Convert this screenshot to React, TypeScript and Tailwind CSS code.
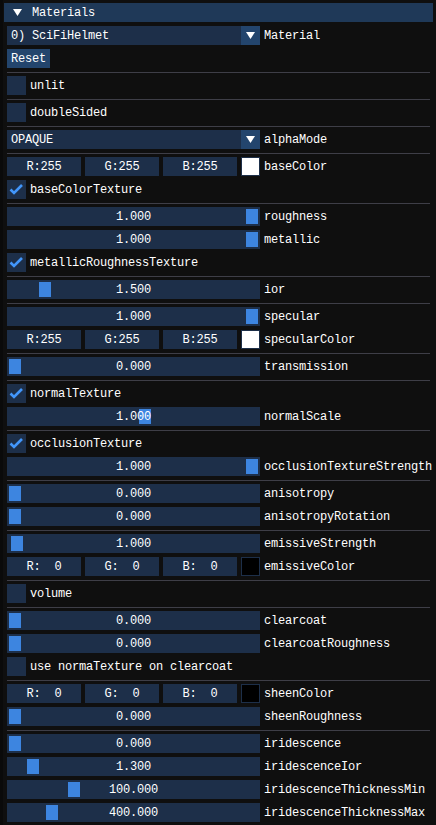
import React from 'react';

const FONT = { fontFamily: '"Liberation Mono", "DejaVu Sans Mono", monospace' };

type Row =
  | { kind: 'combo'; value: string; label: string }
  | { kind: 'button'; label: string }
  | { kind: 'check'; label: string; checked?: boolean }
  | { kind: 'slider'; value: string; grab: number; label: string }
  | { kind: 'color'; r: string; g: string; b: string; swatch: string; label: string }
  | { kind: 'sep' };

// grab = offset of the slider knob from the left edge of the frame (2..239)
const rows: Row[] = [
  { kind: 'combo', value: '0) SciFiHelmet', label: 'Material' },
  { kind: 'button', label: 'Reset' },
  { kind: 'sep' },
  { kind: 'check', label: 'unlit' },
  { kind: 'sep' },
  { kind: 'check', label: 'doubleSided' },
  { kind: 'sep' },
  { kind: 'combo', value: 'OPAQUE', label: 'alphaMode' },
  { kind: 'sep' },
  { kind: 'color', r: 'R:255', g: 'G:255', b: 'B:255', swatch: 'bg-white', label: 'baseColor' },
  { kind: 'check', label: 'baseColorTexture', checked: true },
  { kind: 'sep' },
  { kind: 'slider', value: '1.000', grab: 239, label: 'roughness' },
  { kind: 'slider', value: '1.000', grab: 239, label: 'metallic' },
  { kind: 'check', label: 'metallicRoughnessTexture', checked: true },
  { kind: 'sep' },
  { kind: 'slider', value: '1.500', grab: 32, label: 'ior' },
  { kind: 'sep' },
  { kind: 'slider', value: '1.000', grab: 239, label: 'specular' },
  { kind: 'color', r: 'R:255', g: 'G:255', b: 'B:255', swatch: 'bg-white', label: 'specularColor' },
  { kind: 'sep' },
  { kind: 'slider', value: '0.000', grab: 2, label: 'transmission' },
  { kind: 'sep' },
  { kind: 'check', label: 'normalTexture', checked: true },
  { kind: 'slider', value: '1.000', grab: 132, label: 'normalScale' },
  { kind: 'sep' },
  { kind: 'check', label: 'occlusionTexture', checked: true },
  { kind: 'slider', value: '1.000', grab: 239, label: 'occlusionTextureStrength' },
  { kind: 'sep' },
  { kind: 'slider', value: '0.000', grab: 2, label: 'anisotropy' },
  { kind: 'slider', value: '0.000', grab: 2, label: 'anisotropyRotation' },
  { kind: 'sep' },
  { kind: 'slider', value: '1.000', grab: 4, label: 'emissiveStrength' },
  { kind: 'color', r: 'R:  0', g: 'G:  0', b: 'B:  0', swatch: 'bg-black', label: 'emissiveColor' },
  { kind: 'sep' },
  { kind: 'check', label: 'volume' },
  { kind: 'sep' },
  { kind: 'slider', value: '0.000', grab: 2, label: 'clearcoat' },
  { kind: 'slider', value: '0.000', grab: 2, label: 'clearcoatRoughness' },
  { kind: 'check', label: 'use normaTexture on clearcoat' },
  { kind: 'sep' },
  { kind: 'color', r: 'R:  0', g: 'G:  0', b: 'B:  0', swatch: 'bg-black', label: 'sheenColor' },
  { kind: 'slider', value: '0.000', grab: 2, label: 'sheenRoughness' },
  { kind: 'sep' },
  { kind: 'slider', value: '0.000', grab: 2, label: 'iridescence' },
  { kind: 'slider', value: '1.300', grab: 20, label: 'iridescenceIor' },
  { kind: 'slider', value: '100.000', grab: 61, label: 'iridescenceThicknessMin' },
  { kind: 'slider', value: '400.000', grab: 39, label: 'iridescenceThicknessMax' },
];

function Label({ text }: { text: string }) {
  return <span className="ml-[4px] translate-y-px whitespace-pre leading-[19px]">{text}</span>;
}

function DownArrow({ className }: { className?: string }) {
  return (
    <svg width="9" height="7" viewBox="0 0 9 7" className={className}>
      <polygon points="0,0 9,0 4.5,7" fill="#ffffff" />
    </svg>
  );
}

function Combo({ value, label }: { value: string; label: string }) {
  return (
    <div className="flex h-[19px] items-center">
      <div className="flex h-[19px] w-[253px] bg-[#1d2f49]">
        <span className="flex-1 translate-y-px pl-[4px] leading-[19px] whitespace-pre">{value}</span>
        <div className="flex h-[19px] w-[19px] items-center justify-center bg-[#23456d]">
          <DownArrow />
        </div>
      </div>
      <Label text={label} />
    </div>
  );
}

function Check({ label, checked }: { label: string; checked?: boolean }) {
  return (
    <div className="flex h-[19px] items-center">
      <div className="flex h-[19px] w-[19px] items-center justify-center bg-[#1d2f49]">
        {checked && (
          <svg width="19" height="19" viewBox="0 0 19 19">
            <polyline
              points="3.5,9.5 7,13 15,5"
              fill="none"
              stroke="#4296fa"
              strokeWidth="2.6"
              strokeLinecap="butt"
              strokeLinejoin="miter"
            />
          </svg>
        )}
      </div>
      <Label text={label} />
    </div>
  );
}

function Slider({ value, grab, label }: { value: string; grab: number; label: string }) {
  return (
    <div className="flex h-[19px] items-center">
      <div className="relative h-[19px] w-[253px] bg-[#1d2f49]">
        <div
          className="absolute top-[2px] h-[15px] w-[12px] bg-[#3d85e0]"
          style={{ left: grab }}
        />
        <div className="relative translate-y-px text-center leading-[19px] whitespace-pre">{value}</div>
      </div>
      <Label text={label} />
    </div>
  );
}

function ColorEdit({
  r,
  g,
  b,
  swatch,
  label,
}: {
  r: string;
  g: string;
  b: string;
  swatch: string;
  label: string;
}) {
  return (
    <div className="flex h-[19px] items-center">
      <div className="flex w-[253px] gap-[4px]">
        {[r, g, b].map((c, i) => (
          <div
            key={i}
            className="h-[19px] w-[74px] bg-[#1d2f49] text-center leading-[19px] whitespace-pre"
          >
            <span className="inline-block translate-y-px">{c}</span>
          </div>
        ))}
        <div className={`h-[19px] w-[19px] border border-[#1d2f49] ${swatch}`} />
      </div>
      <Label text={label} />
    </div>
  );
}

export default function App() {
  return (
    <div className="min-h-[825px] bg-[#0a0a0a] text-[12px] tracking-[-0.2px] text-white" style={FONT}>
      <div className="ml-[3px] h-[825px] overflow-hidden bg-[#0f0f0f] pt-[3px]">
        {/* collapsing header */}
        <div className="ml-[1px] flex h-[19px] w-[429px] items-center bg-[#1f3958]">
          <DownArrow className="ml-[9px]" />
          <span className="ml-[10px] translate-y-px leading-[19px]">Materials</span>
        </div>

        <div className="mt-[4px] flex flex-col gap-[4px] pl-[4px]">
          {rows.map((row, i) => {
            switch (row.kind) {
              case 'sep':
                return <div key={i} className="-mb-px h-px w-[423px] bg-[#3e3e47]" />;
              case 'combo':
                return <Combo key={i} value={row.value} label={row.label} />;
              case 'button':
                return (
                  <div key={i} className="flex h-[19px]">
                    <div className="bg-[#23456d] px-[4px] leading-[19px]">
                      <span className="inline-block translate-y-px">{row.label}</span>
                    </div>
                  </div>
                );
              case 'check':
                return <Check key={i} label={row.label} checked={row.checked} />;
              case 'slider':
                return <Slider key={i} value={row.value} grab={row.grab} label={row.label} />;
              case 'color':
                return (
                  <ColorEdit
                    key={i}
                    r={row.r}
                    g={row.g}
                    b={row.b}
                    swatch={row.swatch}
                    label={row.label}
                  />
                );
            }
          })}
        </div>
      </div>
    </div>
  );
}
